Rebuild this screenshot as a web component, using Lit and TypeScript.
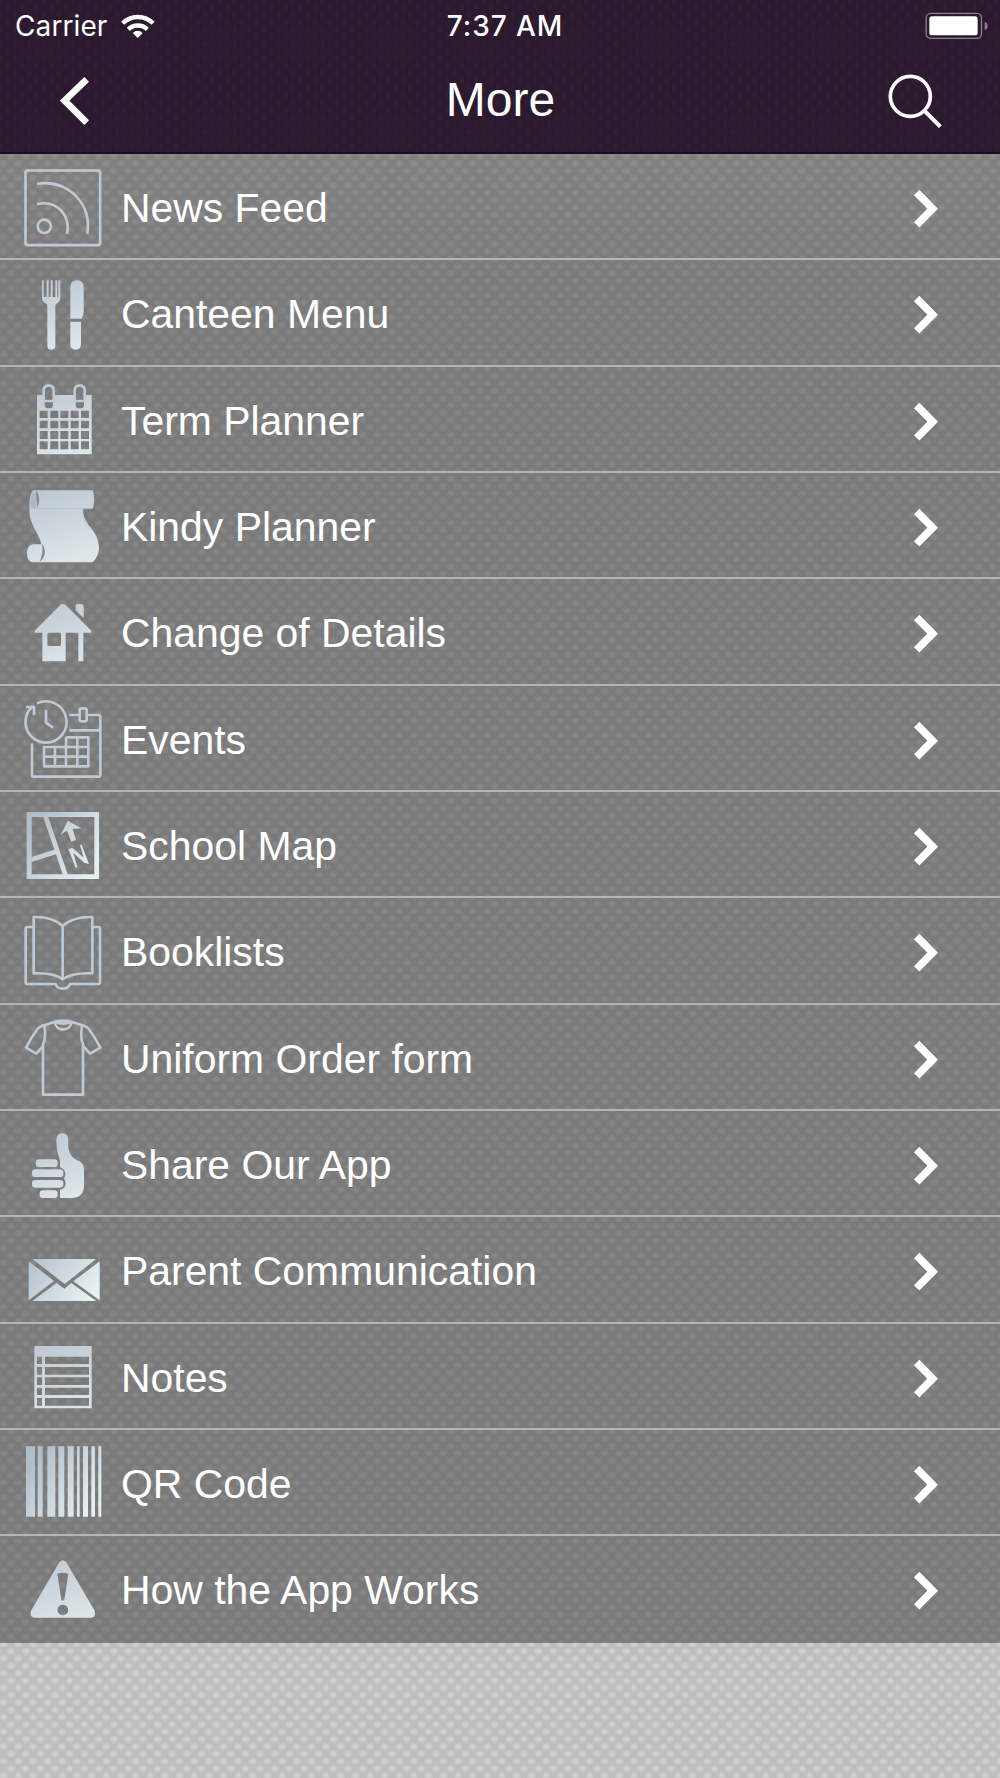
import { LitElement, html, css, svg, type SVGTemplateResult } from "lit";
import { customElement, property } from "lit/decorators.js";

interface Item {
  label: string;
  /** top of the row in icon units (3 units per pixel) */
  top: number;
  art: SVGTemplateResult;
}

const items: Item[] = [
  {
    label: "News Feed",
    top: 462,
    art: svg`<g class="line">
      <rect x="76.5" y="511.500" width="224" height="224" rx="7"/>
      <circle cx="133" cy="679" r="20"/>
      <path d="M111 613C165 598 213 642 201 702M111 551C205 538 276 612 262 702"/></g>`,
  },
  {
    label: "Canteen Menu",
    top: 1,
    art: svg`<g class="fill">
      <path d="M126 62h5v50h9V62h6v50h6V62h6v50h8V62h6v50h3V62h6v54q-1 12-12 16l-3 4v122q0 12-12 12t-12-12V136l-3-4q-12-5-13-16z"/>
      <path d="M211 177V83q0-21 20-21t20 21v72q0 14-6 22zM211 186h32v68q0 16-16 16t-16-16z"/></g>`,
  },
  {
    label: "Term Planner",
    top: 320,
    art: svg`<path class="fill" fill-rule="evenodd" d="M111 404h164v178H111zM119 451v22h24v-22zM151 451v22h24v-22zM181 451v22h24v-22zM212 451v22h24v-22zM243 451v22h24v-22zM119 481v23h24v-23zM151 481v23h24v-23zM181 481v23h24v-23zM212 481v23h24v-23zM243 481v23h24v-23zM119 512v24h24v-24zM151 512v24h24v-24zM181 512v24h24v-24zM212 512v24h24v-24zM243 512v24h24v-24zM119 543v24h24v-24zM151 543v24h24v-24zM181 543v24h24v-24zM212 543v24h24v-24zM243 543v24h24v-24z"/>
      <rect class="hole" x="134" y="384" width="25" height="60" rx="11"/><rect class="hole" x="227" y="384" width="25" height="60" rx="11"/>
      <path class="line" d="M131 422V390q0-14 15-14t15 14v32zM224 422V390q0-14 15-14t15 14v32z"/>`,
  },
  {
    label: "Kindy Planner",
    top: 9,
    art: svg`<path class="fill" d="M102 61H277q5 2 5 25 0 29-6 30H249c0 55 48 60 48 119q-2 28-20 42H100q-19-2-19-26 0-27 19-28h24l2 8c-5-40-38-63-38-111 0-40 5-57 14-59z"/>
      <path class="crease" d="M109 63c10 4 12 42 0 52 7-12-3-31 0-52zM126 222c14 14 10 43-7 53 6-15 11-30 7-53z"/>
      <path d="M112 116H272M250 119c-5 20 8 48 22 61" fill="none" stroke="#9fa9b1" stroke-width="2" opacity=".4"/>
      <path d="M106 65q-15 2-16 39 0 12 16 12 7-22 0-51z" fill="#8e969c" opacity=".35"/>`,
  },
  {
    label: "Change of Details",
    top: 328,
    art: svg`<g class="fill"><path fill-rule="evenodd" d="M181 406q8-6 16 0l77 77v6H250v86H235V489H197v86H127V489H104v-6zM146 489q-4 0-4 4v31q0 5 5 5h32q4 0 4-5v-31q0-4-4-4z"/>
      <path d="M227 422V410q0-7 8-7h8q8 0 8 7v36z"/></g>`,
  },
  {
    label: "Events",
    top: 2,
    art: svg`<g class="line">
      <path d="M111 54A62 62 0 1 1 138 172A62 62 0 0 1 98 63"/>
      <path d="M78 65H102V90M138 73V112L159 127M208 89H237M262 89H296q5 0 5 5V269q0 5-5 5H101q-5 0-5-5V174M208 135H300"/>
      <rect x="239" y="69" width="21" height="39" rx="5"/>
      <path d="M198 156H265V243H132V185H265M198 156V243M232 156V243M165 185V243M132 214H265"/></g>`,
  },
  {
    label: "School Map",
    top: 321,
    art: svg`<g class="fill sheen">
      <path fill-rule="evenodd" d="M80 381h217v201H80zM95 396v172h188V396z"/>
      <path d="M129 394h15l60 177h-15l-21-63-74 23v-15l69-22z"/>
      <path d="M203 407l41 23-26 2 10 33-14 5-13-33-19 12z"/>
      <path d="M204 493l13-5 34 30-11-37 5-2 22 58-13-3-34-30 12 42-5 3-20-52z"/></g>`,
  },
  {
    label: "Booklists",
    top: 10,
    art: svg`<g class="line">
      <path d="M188 93Q154 65 101 67V236Q163 234 188 254Q215 234 277 236V67Q223 65 188 93V252"/>
      <path d="M99 97H82q-5 0-5 5V263q0 5 5 5h85q4 14 21 14t22-14h86q4 0 4-5V102q0-5-4-5H280"/></g>`,
  },
  {
    label: "Uniform Order form",
    top: 329,
    art: svg`<g class="line">
      <path d="M129 452L109 475 78 457Q94 426 112 402 118 394 127 391L166 379Q189 373 213 379L252 391Q261 394 267 402 285 426 301 457L270 475 249 452"/>
      <path d="M133 392Q139 428 129 447V598H249V447Q240 428 246 392M164 380C169 410 209 410 215 380M166 381Q190 389 213 381"/></g>`,
  },
  {
    label: "Share Our App",
    top: 3,
    art: svg`<g class="fill">
      <rect x="107" y="148" width="66" height="23" rx="10"/><rect x="96" y="178" width="94" height="23" rx="10"/>
      <rect x="96" y="210" width="94" height="23" rx="10"/><rect x="119" y="241" width="54" height="23" rx="10"/>
      <path d="M169 92q0-22 18-22t18 22v18c2 25 16 37 34 44q13 9 13 25v46q0 38-36 39H180V239q15-2 17-18 0-8-5-15 5-5 4-16-2-13-16-18V150q-11-27-11-58z"/></g>`,
  },
  {
    label: "Parent Communication",
    top: 322,
    art: svg`<g class="fill sheen">
      <path d="M97 448H288L194 523z"/><path d="M86 455L162 514 86 572z"/><path d="M299 455V572L220 515z"/>
      <path d="M97 574L170 520 193 537 214 520 289 574z"/></g>`,
  },
  {
    label: "Notes",
    top: 11,
    art: svg`<path class="fill" fill-rule="evenodd" d="M103 77H275V264H103zM111 109v22h15v-22zM135 109v22H267v-22zM111 140v23h15v-23zM135 140v23H267v-23zM111 171v23h15v-23zM135 171v23H267v-23zM111 202v22h15v-22zM135 202v22H267v-22zM111 233v23h15v-23zM135 233v23H267v-23z"/>`,
  },
  {
    label: "QR Code",
    top: 330,
    art: svg`<path class="fill sheen" d="M78 379h27v211H78zM113 379h15v211h-15zM142 379h24v211h-24zM175 379h18v211h-18zM203 379h18v211h-18zM231 379h8v211h-8zM249 379h15v211h-15zM274 379h11v211h-11zM295 379h9v211h-9z"/>`,
  },
  {
    label: "How the App Works",
    top: 19,
    art: svg`<path class="fill" fill-rule="evenodd" d="M178 98q10-12 21 0L284 243q5 20-12 21H105q-17-1-12-21zM172 132l12 78q4 5 9 0l12-78q-16-6-33 0zM188.500 225a16 16 0 1 0 .1 0z"/>`,
  },
];

@customElement("menu-row")
class MenuRow extends LitElement {
  @property({ attribute: false }) item!: Item;

  static styles = css`
    :host { display: flex; align-items: flex-start; box-sizing: border-box; height: 106.333px; }
    .icon { width: 120.5px; height: 106.333px; flex: none; }
    .arrow { width: 160px; height: 106.333px; flex: none; }
    .label {
      flex: 1; padding: 1px 0 0 0.5px; color: #fff; white-space: nowrap;
      font: 40.9px/106px "Liberation Sans", Arial, sans-serif;
    }
    .fill { fill: url(#metal); }
    .sheen { fill: url(#sheen); }
    .line { fill: none; stroke: #bfcad5; stroke-width: 7.8; stroke-linejoin: round; }
    .hole { fill: #7d7d7d; }
    .crease { fill: #858c91; }
    .chev { fill: none; stroke: #fff; stroke-width: 23; }
  `;

  render() {
    const { top, art, label } = this.item;
    return html`
      <svg class="icon" viewBox="0 ${top} 361.5 319">
        <defs>
          <linearGradient id="metal" gradientUnits="userSpaceOnUse" x1="110" y1=${top + 50} x2="190" y2=${top + 270}>
            <stop offset="0" stop-color="#bcc7d1" />
            <stop offset=".5" stop-color="#ccd5dc" />
            <stop offset="1" stop-color="#dde7eb" />
          </linearGradient>
          <linearGradient id="sheen" gradientUnits="userSpaceOnUse" x1="90" y1=${top + 110} x2="270" y2=${top + 240}>
            <stop offset="0" stop-color="#b2bec9" />
            <stop offset=".5" stop-color="#ccd7de" />
            <stop offset="1" stop-color="#e7f1f4" />
          </linearGradient>
        </defs>
        ${art}
      </svg>
      <span class="label">${label}</span>
      <svg class="arrow" viewBox="0 0 480 319">
        <path class="chev" d="M230 115.500L278 164 230 212.500" />
      </svg>
    `;
  }
}

@customElement("app-root")
class AppRoot extends LitElement {
  static styles = css`
    :host {
      display: flex; flex-direction: column; box-sizing: border-box;
      width: 1000px; height: 1778px; overflow: hidden;
      background-color: #bdbdbd;
      background-image:
        radial-gradient(ellipse 5.2px 4.4px at 50% 50%, #d2d2d2 25%, rgba(210, 210, 210, 0) 100%),
        radial-gradient(ellipse 5.2px 4.4px at 50% 50%, #d2d2d2 25%, rgba(210, 210, 210, 0) 100%);
      background-size: 14.667px 14.667px;
      background-position: 3.667px 2.4px, 11px 9.733px;
    }
    .header {
      box-sizing: border-box; height: 154px; flex: none;
      display: flex; flex-direction: column;
      border-bottom: 2px solid #1d0b21;
      background-color: #2b192e;
      background-image:
        radial-gradient(ellipse 3px 5.5px at 50% 50%, #311e35 30%, rgba(49, 30, 53, 0) 100%),
        radial-gradient(ellipse 3px 5.5px at 50% 50%, #311e35 30%, rgba(49, 30, 53, 0) 100%);
      background-size: 14.667px 14.667px;
      background-position: 0 0, 7.333px 7.333px;
      color: #fff;
    }
    .status, .nav { display: grid; grid-template-columns: 1fr auto 1fr; align-items: center; }
    .status { height: 51px; font: 28px/34px Inter, sans-serif; }
    .carrier { display: flex; align-items: center; padding-left: 15px; letter-spacing: 0.1px; }
    .wifi { width: 36px; height: 26px; margin-left: 12.5px; }
    .time { font-weight: 500; font-size: 28px; letter-spacing: 0.9px; padding-left: 10px; }
    .battery { width: 64px; height: 28px; justify-self: end; margin-right: 11px; }
    .nav { height: 99px; }
    .title { font: 48px/56px "Liberation Sans", Arial, sans-serif; padding: 0 0 1px 1px; }
    .back { width: 30px; height: 50px; margin-left: 60px; }
    .search { width: 54px; height: 54px; justify-self: end; margin-right: 58.5px; }
    .list {
      flex: none; display: flex; flex-direction: column; height: 1488.667px;
      background: linear-gradient(rgba(0, 0, 0, 0.32), rgba(0, 0, 0, 0.358) 130px, rgba(0, 0, 0, 0.358));
    }
    menu-row:not(:last-child) { border-bottom: 2px solid #b4b4b4; }
  `;

  render() {
    return html`
      <header class="header">
        <div class="status">
          <div class="carrier">
            Carrier
            <svg class="wifi" viewBox="360 34 108 78">
              <g fill="none" stroke="#fff" stroke-width="13">
                <path d="M368 65A64 64 0 0 1 459 65" />
                <path d="M385 83A41 41 0 0 1 442 83" />
              </g>
              <path d="M413 109L398 94Q413 80 428 94Z" fill="#fff" />
            </svg>
          </div>
          <span class="time">7:37 AM</span>
          <svg class="battery" viewBox="255 31 192 84">
            <rect x="258.5" y="35" width="166" height="75" rx="14" fill="none" stroke="#8b808d" stroke-width="4" />
            <rect x="268" y="44" width="145" height="57" rx="8" fill="#fff" />
            <path d="M434 60Q443 64 443 73T434 86Z" fill="#8b808d" />
          </svg>
        </div>
        <div class="nav">
          <svg class="back" viewBox="180 228 90 150">
            <path d="M260 238L194 302 260 368" fill="none" stroke="#fff" stroke-width="20" />
          </svg>
          <span class="title">More</span>
          <svg class="search" viewBox="142 221 162 162">
            <circle cx="209" cy="288" r="60" fill="none" stroke="#fff" stroke-width="11" />
            <path d="M251 331L299 379" stroke="#fff" stroke-width="12" />
          </svg>
        </div>
      </header>
      <main class="list">${items.map((item) => html`<menu-row .item=${item}></menu-row>`)}</main>
    `;
  }
}
